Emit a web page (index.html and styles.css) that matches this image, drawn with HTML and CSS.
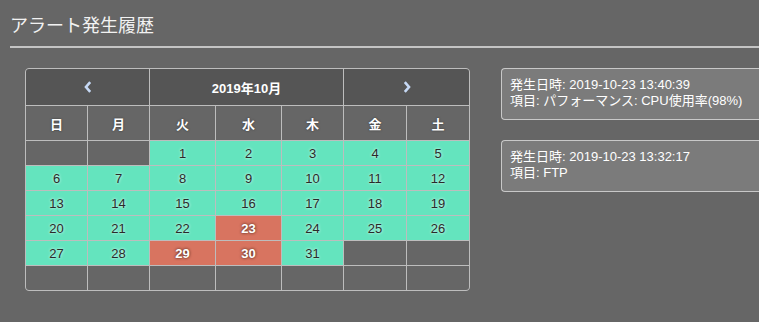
FILE: index.html
```html
<!DOCTYPE html>
<html lang="ja">
<head>
<meta charset="utf-8">
<title>アラート発生履歴</title>
<link rel="stylesheet" href="styles.css">
</head>
<body>
<h1 class="title">アラート発生履歴</h1>
<div class="content">
  <div class="calendar">
    <div class="nav prev"><svg width="8" height="12" viewBox="0 0 8 12"><path d="M6.2 1.2 L2 6 L6.2 10.8" fill="none" stroke="#c6d9f5" stroke-width="2.6"/></svg></div>
    <div class="nav month">2019年10月</div>
    <div class="nav next"><svg width="8" height="12" viewBox="0 0 8 12"><path d="M1.8 1.2 L6 6 L1.8 10.8" fill="none" stroke="#c6d9f5" stroke-width="2.6"/></svg></div>

    <div class="wd">日</div><div class="wd">月</div><div class="wd">火</div><div class="wd">水</div><div class="wd">木</div><div class="wd">金</div><div class="wd">土</div>

    <div class="d"></div><div class="d"></div><div class="d ok">1</div><div class="d ok">2</div><div class="d ok">3</div><div class="d ok">4</div><div class="d ok">5</div>
    <div class="d ok">6</div><div class="d ok">7</div><div class="d ok">8</div><div class="d ok">9</div><div class="d ok">10</div><div class="d ok">11</div><div class="d ok">12</div>
    <div class="d ok">13</div><div class="d ok">14</div><div class="d ok">15</div><div class="d ok">16</div><div class="d ok">17</div><div class="d ok">18</div><div class="d ok">19</div>
    <div class="d ok">20</div><div class="d ok">21</div><div class="d ok">22</div><div class="d ng">23</div><div class="d ok">24</div><div class="d ok">25</div><div class="d ok">26</div>
    <div class="d ok">27</div><div class="d ok">28</div><div class="d ng">29</div><div class="d ng">30</div><div class="d ok">31</div><div class="d"></div><div class="d"></div>
    <div class="d"></div><div class="d"></div><div class="d"></div><div class="d"></div><div class="d"></div><div class="d"></div><div class="d"></div>
  </div>
  <div class="alerts">
    <div class="card">
      <div>発生日時: 2019-10-23 13:40:39</div>
      <div>項目: パフォーマンス: CPU使用率(98%)</div>
    </div>
    <div class="card">
      <div>発生日時: 2019-10-23 13:32:17</div>
      <div>項目: FTP</div>
    </div>
  </div>
</div>
</body>
</html>
```

FILE: styles.css
```css
html, body {
  margin: 0;
  overflow: hidden;
}
body {
  background: #666666;
  padding: 10px 0 0 10px;
  font-family: "Liberation Sans", "Noto Sans CJK JP", sans-serif;
  color: #ffffff;
}
.title {
  margin: 0;
  padding: 1px 0 9px;
  font-family: "Noto Sans CJK JP", sans-serif;
  font-size: 18px;
  line-height: 26px;
  font-weight: normal;
  color: #f2f2f2;
  border-bottom: 2px solid #c4c4c4;
}
.content {
  display: flex;
  align-items: flex-start;
  gap: 31px;
  margin-top: 20px;
  padding-left: 15px;
}
.calendar {
  flex: none;
  display: grid;
  grid-template-columns: 61px 61px 65px 65px 61px 62px 62px;
  grid-template-rows: 36px 34px repeat(6, 24px);
  gap: 1px;
  background: #bdbdbd;
  border: 1px solid #bdbdbd;
  border-radius: 4px;
  overflow: hidden;
  font-size: 13px;
}
.nav {
  background: #555555;
  display: flex;
  align-items: center;
  justify-content: center;
  font-weight: bold;
  color: #ffffff;
}
.prev { grid-column: 1 / 3; }
.month { grid-column: 3 / 6; }
.next { grid-column: 6 / 8; }
.wd {
  background: #666666;
  display: flex;
  align-items: center;
  justify-content: center;
  font-weight: bold;
  color: #ffffff;
  text-shadow: 0 0 2px #333;
}
.d {
  background: #666666;
  display: flex;
  align-items: center;
  justify-content: center;
}
.ok {
  background: #64e4be;
  color: #2a2a2a;
  text-shadow: 0 0 3px #ffffff;
}
.ng {
  background: #d87460;
  color: #ffffff;
  font-weight: bold;
  text-shadow: 0 0 3px #3a1a10;
}
.alerts {
  flex: 1;
  min-width: 0;
  display: flex;
  flex-direction: column;
  gap: 20px;
}
.card {
  background: #7b7b7b;
  border: 1px solid #c8c8c8;
  border-right: none;
  border-radius: 4px 0 0 4px;
  padding: 8px 8px 10px;
  font-size: 13px;
  line-height: 16px;
  color: #ffffff;
  white-space: nowrap;
}
```
